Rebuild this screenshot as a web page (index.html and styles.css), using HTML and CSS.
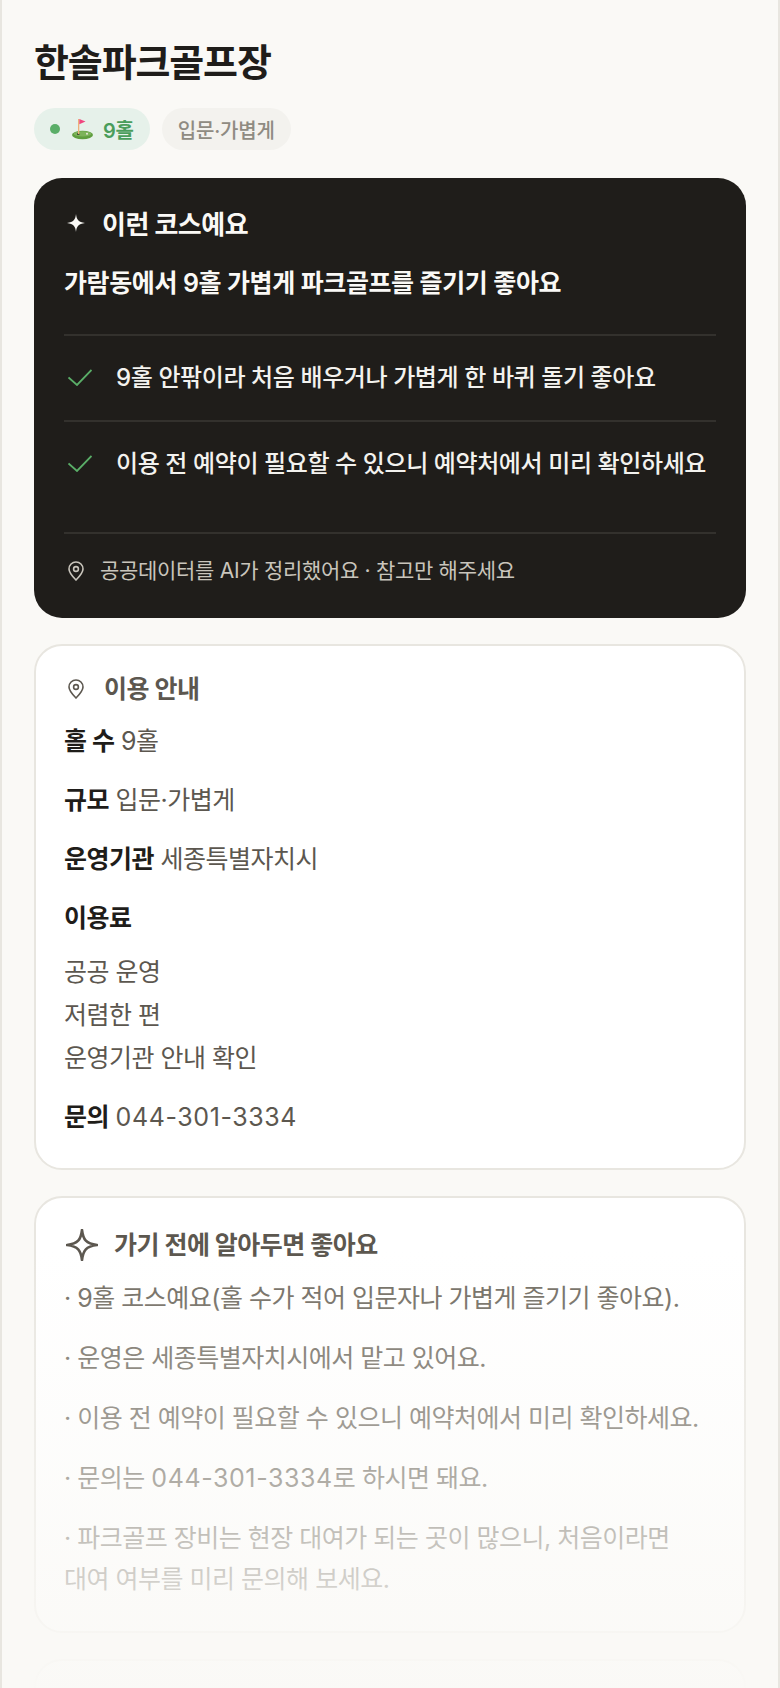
FILE: index.html
```html
<!DOCTYPE html>
<html lang="ko">
<head>
    <meta charset="UTF-8">
    <meta name="viewport" content="width=device-width, initial-scale=1.0">
    <title>한솔파크골프장</title>
    <link rel="stylesheet" href="styles.css">
</head>
<body>
    <main class="page">
        <h1 class="title">한솔파크골프장</h1>
        <div class="chips">
            <span class="chip chip-green">
                <span class="dot"></span>
                <svg class="flag" width="22" height="22" viewBox="0 0 22 22">
                    <ellipse cx="10.5" cy="17" rx="10.5" ry="4.2" fill="#5f9e3f"/>
                    <ellipse cx="10.5" cy="15.8" rx="9" ry="2.6" fill="#7cb35a"/>
                    <rect x="5" y="15.4" width="2.4" height="1.4" fill="#3a3a2e"/>
                    <circle cx="15" cy="15.8" r="1" fill="#e8e8dc"/>
                    <rect x="6" y="1" width="1.3" height="15" fill="#eeb07a"/>
                    <path d="M7.3 1 L13.5 3.6 L7.3 6.2 Z" fill="#f0457f"/>
                </svg>
                9홀
            </span>
            <span class="chip chip-gray">입문·가볍게</span>
        </div>

        <section class="dark-card">
            <h2 class="dark-head">
                <svg class="spark" width="18" height="18" viewBox="0 0 16 16"><path d="M8 0 C8.6 5 10 7.2 16 8 C10 8.8 8.6 11 8 16 C7.4 11 6 8.8 0 8 C6 7.2 7.4 5 8 0 Z" fill="#faf9f6"/></svg>
                이런 코스예요
            </h2>
            <p class="dark-lead">가람동에서 9홀 가볍게 파크골프를 즐기기 좋아요</p>
            <ul class="checks">
                <li class="check-row">
                    <svg class="check" width="24" height="17" viewBox="0 0 24 17"><path d="M0.5 8.5 L9 16 L23.5 1" fill="none" stroke="#5aae68" stroke-width="1.8"/></svg>
                    9홀 안팎이라 처음 배우거나 가볍게 한 바퀴 돌기 좋아요
                </li>
                <li class="check-row">
                    <svg class="check" width="24" height="17" viewBox="0 0 24 17"><path d="M0.5 8.5 L9 16 L23.5 1" fill="none" stroke="#5aae68" stroke-width="1.8"/></svg>
                    이용 전 예약이 필요할 수 있으니 예약처에서 미리 확인하세요
                </li>
            </ul>
            <p class="dark-foot">
                <svg class="pin" width="16" height="20" viewBox="0 0 16 20"><path d="M8 19 C3.5 14.5 1 11.5 1 8 A7 7 0 0 1 15 8 C15 11.5 12.5 14.5 8 19 Z" fill="none" stroke="currentColor" stroke-width="1.6"/><circle cx="8" cy="8" r="2.4" fill="none" stroke="currentColor" stroke-width="1.6"/></svg>
                공공데이터를 AI가 정리했어요 · 참고만 해주세요
            </p>
        </section>

        <section class="card info-card">
            <h2 class="card-head">
                <svg class="pin" width="16" height="20" viewBox="0 0 16 20"><path d="M8 19 C3.5 14.5 1 11.5 1 8 A7 7 0 0 1 15 8 C15 11.5 12.5 14.5 8 19 Z" fill="none" stroke="currentColor" stroke-width="1.6"/><circle cx="8" cy="8" r="2.4" fill="none" stroke="currentColor" stroke-width="1.6"/></svg>
                이용 안내
            </h2>
            <p class="info"><b>홀 수</b> 9홀</p>
            <p class="info"><b>규모</b> 입문·가볍게</p>
            <p class="info"><b>운영기관</b> 세종특별자치시</p>
            <p class="info"><b>이용료</b></p>
            <p class="fee">공공 운영<br>저렴한 편<br>운영기관 안내 확인</p>
            <p class="info"><b>문의</b> <span class="num">044-301-3334</span></p>
        </section>

        <section class="card tips">
            <h2 class="card-head">
                <svg class="spark-line" width="32" height="32" viewBox="0 0 32 32"><path d="M16 1 C17.2 11 20 14.6 31 16 C20 17.4 17.2 21 16 31 C14.8 21 12 17.4 1 16 C12 14.6 14.8 11 16 1 Z" fill="none" stroke="currentColor" stroke-width="2.6" stroke-linejoin="round"/></svg>
                가기 전에 알아두면 좋아요
            </h2>
            <p class="tip">· 9홀 코스예요(홀 수가 적어 입문자나 가볍게 즐기기 좋아요).</p>
            <p class="tip">· 운영은 세종특별자치시에서 맡고 있어요.</p>
            <p class="tip">· 이용 전 예약이 필요할 수 있으니 예약처에서 미리 확인하세요.</p>
            <p class="tip">· 문의는 <span class="num">044-301-3334</span>로 하시면 돼요.</p>
            <p class="tip">· 파크골프 장비는 현장 대여가 되는 곳이 많으니, 처음이라면<br>대여 여부를 미리 문의해 보세요.</p>
        </section>
        <section class="card next-card"></section>
        <div class="fade"></div>
    </main>
</body>
</html>
```

FILE: styles.css
```css
* {
    box-sizing: border-box;
}
html, body {
    margin: 0;
    padding: 0;
}
body {
    background-color: #faf9f6;
    font-family: Inter, "Noto Sans CJK KR", sans-serif;
    color: #1f1d1a;
}
h1, h2, p, ul {
    margin: 0;
    padding: 0;
}
.page {
    position: relative;
    height: 1688px;
    overflow: hidden;
    padding: 37px 32px 0;
    border-left: 2px solid #e8e6e0;
    border-right: 2px solid #e8e6e0;
}
.title {
    font-size: 38px;
    line-height: 50px;
    font-weight: 700;
    letter-spacing: -1.14px;
}
.chips {
    display: flex;
    gap: 12px;
    margin-top: 21px;
}
.chip {
    display: flex;
    align-items: center;
    height: 42px;
    padding: 0 16px;
    border-radius: 21px;
    font-size: 20px;
    font-weight: 500;
    letter-spacing: -0.2px;
}
.chip-green {
    background-color: #e6f1ea;
    color: #4a9d5b;
    font-weight: 600;
}
.chip-gray {
    background-color: #f3f2ee;
    color: #8f8b82;
}
.dot {
    width: 10px;
    height: 10px;
    border-radius: 50%;
    background-color: #5aae68;
    margin-right: 12px;
}
.flag {
    margin-right: 9px;
}
.dark-card {
    margin-top: 28px;
    padding: 31px 30px 33px;
    border-radius: 28px;
    background-color: #1f1d1a;
    color: #faf9f6;
}
.dark-head {
    display: flex;
    align-items: center;
    font-size: 26px;
    line-height: 32px;
    font-weight: 700;
    letter-spacing: -0.52px;
}
.spark {
    margin: 0 17px 5px 3px;
}
.dark-lead {
    margin-top: 25px;
    padding-bottom: 34px;
    border-bottom: 2px solid #33312d;
    font-size: 25px;
    line-height: 34px;
    font-weight: 600;
    letter-spacing: -0.4px;
}
.checks {
    list-style: none;
}
.check-row {
    display: flex;
    align-items: center;
    gap: 24px;
    height: 86px;
    padding-bottom: 6px;
    font-size: 24px;
    font-weight: 500;
    letter-spacing: -0.4px;
    color: #f3f2ee;
    border-bottom: 2px solid #33312d;
}
.check-row:last-child {
    height: 84px;
    margin-bottom: 26px;
    border-bottom: none;
}
.check {
    flex: none;
    margin: 4px 0 0 4px;
}
.dark-foot {
    display: flex;
    align-items: center;
    padding-top: 23px;
    border-top: 2px solid #33312d;
    font-size: 21px;
    line-height: 28px;
    color: #c9c5bc;
    letter-spacing: -0.3px;
}
.pin {
    margin: 0 16px 0 4px;
}
.card {
    margin-top: 26px;
    padding: 27px 28px 32px;
    border: 2px solid #e8e6e0;
    border-radius: 28px;
    background-color: #fff;
}
.card-head {
    display: flex;
    align-items: center;
    font-size: 25px;
    line-height: 32px;
    font-weight: 700;
    color: #5c574f;
    letter-spacing: -0.5px;
}
.card-head .pin {
    margin-right: 20px;
}
.info {
    margin-top: 21px;
    font-size: 25px;
    line-height: 38px;
    color: #5c574f;
    letter-spacing: -0.5px;
}
.card-head + .info {
    margin-top: 17px;
}
.info b {
    color: #1f1d1a;
}
.num {
    letter-spacing: 0.6px;
}
.fee {
    margin-top: 14px;
    margin-bottom: -3px;
    font-size: 25px;
    line-height: 43px;
    color: #5c574f;
    letter-spacing: -0.5px;
}
.tips {
    padding: 31px 28px 31px;
}
.spark-line {
    margin: 0 16px 0 2px;
}
.tip {
    margin-top: 19px;
    font-size: 25px;
    line-height: 41px;
    color: #6f6a60;
    letter-spacing: -0.5px;
}
.card-head + .tip {
    margin-top: 17px;
}
.next-card {
    height: 120px;
}
.fade {
    position: absolute;
    left: -2px;
    right: -2px;
    top: 1250px;
    height: 438px;
    background: linear-gradient(to bottom, rgba(250, 249, 246, 0) 0, rgba(250, 249, 246, 0.45) 225px, rgba(250, 249, 246, 0.7) 326px, rgba(250, 249, 246, 0.97) 100%);
    pointer-events: none;
}
```
